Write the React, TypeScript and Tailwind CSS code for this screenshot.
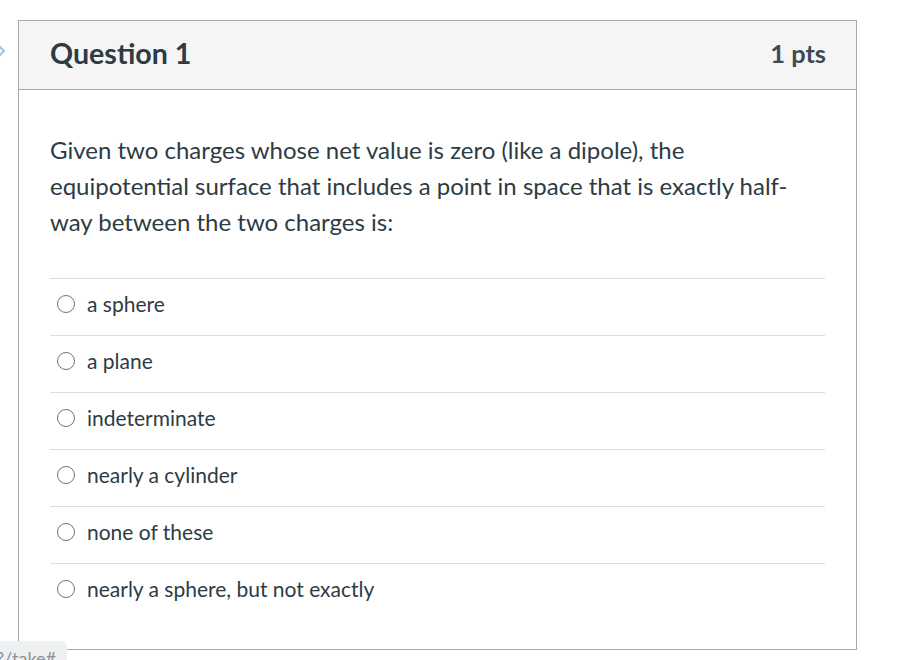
import React, { useState } from 'react';

const answers = [
  'a sphere',
  'a plane',
  'indeterminate',
  'nearly a cylinder',
  'none of these',
  'nearly a sphere, but not exactly',
];

export default function App() {
  const [selected, setSelected] = useState<string | null>(null);

  return (
    <div className="relative h-[660px] w-[899px] overflow-hidden bg-white font-['Lato','Liberation_Sans',sans-serif] text-[#2d3b45]">
      {/* collapsed side nav arrow */}
      <div className="absolute left-[-5px] top-[43px] text-[#a8c2dc]">
        <svg width="12" height="16" viewBox="0 0 12 16" fill="none">
          <path d="M3 2l6 6-6 6" stroke="currentColor" strokeWidth="2" />
        </svg>
      </div>

      <div className="pl-[18px] pt-[20px]">
        <div className="w-[839px] border border-[#a9a9a9]">
          {/* Header */}
          <div className="flex h-[69px] items-center justify-between border-b border-[#a9a9a9] bg-[#f5f5f5] pb-[4px] pl-[31px] pr-[30px]">
            <h2 className="text-[28.6px] font-bold">Question 1</h2>
            <span className="text-[25.4px] font-bold text-[#3d4a53]">1 pts</span>
          </div>

          {/* Body */}
          <div className="px-[31px] pb-[29px] pt-[42px]">
            <p className="text-[24px] leading-[36px]">
              Given two charges whose net value is zero (like a dipole), the equipotential surface that includes a point in space that is exactly half-way between the two charges is:
            </p>

            <div className="mt-[38px]">
              {answers.map((a) => (
                <label
                  key={a}
                  className="flex h-[57px] cursor-pointer items-center gap-[12px] border-t border-[#dcdcdc] pb-[7px] pl-[7px]"
                >
                  <input
                    type="radio"
                    name="q1"
                    checked={selected === a}
                    onChange={() => setSelected(a)}
                    className="peer sr-only"
                  />
                  <span className="h-[18px] w-[18px] shrink-0 rounded-full border-[1.5px] border-[#737373] bg-white peer-checked:border-[5px] peer-checked:border-[#2d3b45]" />
                  <span className="text-[21px]">{a}</span>
                </label>
              ))}
            </div>
          </div>
        </div>
      </div>

      {/* url hint at bottom left */}
      <div className="absolute left-0 top-[641px] h-[30px] w-[67px] rounded-tr-[6px] bg-[#eef0f2] text-[18px] leading-[34px] text-[#8a9096]">
        <span className="ml-[-4px]">?/take#</span>
      </div>
    </div>
  );
}
